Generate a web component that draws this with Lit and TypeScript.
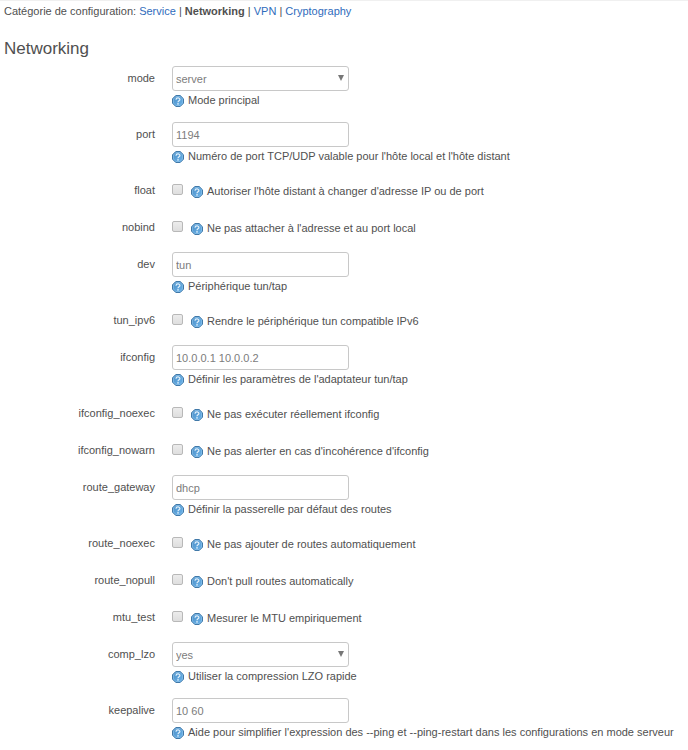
import { LitElement, html, css, svg } from "lit";
import { customElement, property } from "lit/decorators.js";

interface Option {
  name: string;
  kind: "select" | "text" | "check";
  value?: string;
  help: string;
}

const OPTIONS: Option[] = [
  { name: "mode", kind: "select", value: "server", help: "Mode principal" },
  { name: "port", kind: "text", value: "1194", help: "Numéro de port TCP/UDP valable pour l'hôte local et l'hôte distant" },
  { name: "float", kind: "check", help: "Autoriser l'hôte distant à changer d'adresse IP ou de port" },
  { name: "nobind", kind: "check", help: "Ne pas attacher à l'adresse et au port local" },
  { name: "dev", kind: "text", value: "tun", help: "Périphérique tun/tap" },
  { name: "tun_ipv6", kind: "check", help: "Rendre le périphérique tun compatible IPv6" },
  { name: "ifconfig", kind: "text", value: "10.0.0.1 10.0.0.2", help: "Définir les paramètres de l'adaptateur tun/tap" },
  { name: "ifconfig_noexec", kind: "check", help: "Ne pas exécuter réellement ifconfig" },
  { name: "ifconfig_nowarn", kind: "check", help: "Ne pas alerter en cas d'incohérence d'ifconfig" },
  { name: "route_gateway", kind: "text", value: "dhcp", help: "Définir la passerelle par défaut des routes" },
  { name: "route_noexec", kind: "check", help: "Ne pas ajouter de routes automatiquement" },
  { name: "route_nopull", kind: "check", help: "Don't pull routes automatically" },
  { name: "mtu_test", kind: "check", help: "Mesurer le MTU empiriquement" },
  { name: "comp_lzo", kind: "select", value: "yes", help: "Utiliser la compression LZO rapide" },
  { name: "keepalive", kind: "text", value: "10 60", help: "Aide pour simplifier l'expression des --ping et --ping-restart dans les configurations en mode serveur" },
];

const helpIcon = svg`<svg class="icon" viewBox="0 0 12 12" aria-hidden="true">
  <defs>
    <linearGradient id="g" x1="0" y1="0" x2="1" y2="1">
      <stop offset="0" stop-color="#4d8fc6" />
      <stop offset="1" stop-color="#68b2ea" />
    </linearGradient>
  </defs>
  <path d="M3.8 .5h4.4l3.3 3.3v4.4l-3.3 3.3H3.8L.5 8.2V3.8z" fill="url(#g)" stroke="#4179a8" stroke-linejoin="round" />
  <path d="M4 1.5h4l2.5 2.5v4L8 10.5H4L1.5 8V4z" fill="none" stroke="#8fc3ea" stroke-width=".6" />
  <path d="M4 4.7C4 2.4 8 2.4 7.9 4.6C7.8 5.8 6 5.8 6 7.2" fill="none" stroke="#e4f2fc" stroke-width="1.2" />
  <circle cx="6" cy="8.9" r=".8" fill="#e4f2fc" />
</svg>`;

@customElement("option-row")
class OptionRow extends LitElement {
  @property({ attribute: false }) option!: Option;

  static styles = css`
    :host {
      display: grid;
      grid-template-columns: 155px minmax(0, 1fr);
      column-gap: 17px;
      padding-bottom: 12px;
    }
    .name {
      line-height: 24px;
      text-align: right;
    }
    .check {
      display: flex;
      align-items: flex-start;
      gap: 8px;
      height: 25px;
    }
    .box {
      appearance: none;
      box-sizing: border-box;
      flex: none;
      width: 11px;
      height: 11px;
      margin: 6px 0 0;
      border: 1px solid #b8b8b8;
      border-radius: 2px;
      background: linear-gradient(#ececec, #dedede);
    }
    .box:checked {
      background: #3f86c4;
    }
    .field {
      position: relative;
      width: 177px;
      height: 25px;
    }
    .input {
      appearance: none;
      box-sizing: border-box;
      display: block;
      width: 100%;
      height: 25px;
      margin: 0;
      padding: 0 3px;
      border: 1px solid #c8c8c8;
      border-radius: 3px;
      background: #fff;
      color: #7c7c7c;
      font: inherit;
    }
    .arrow {
      position: absolute;
      top: 9px;
      right: 5px;
      width: 6px;
      height: 6px;
      fill: #777;
      pointer-events: none;
    }
    .help {
      display: flex;
      align-items: center;
      gap: 4px;
      height: 19px;
      line-height: 16px;
    }
    .help-text {
      padding-bottom: 2px;
    }
    .check .help {
      height: 28px;
    }
    .icon {
      flex: none;
      width: 12px;
      height: 12px;
    }
  `;

  render() {
    const { name, kind, value, help } = this.option;
    const helpLine = html`<span class="help" id="help">${helpIcon}<span class="help-text">${help}</span></span>`;
    return html`
      <label class="name" for="control">${name}</label>
      ${kind === "check"
        ? html`<div class="check">
            <input class="box" id="control" type="checkbox" aria-describedby="help" />${helpLine}
          </div>`
        : html`<div>
            <div class="field">
              ${kind === "select"
                ? html`<select class="input" id="control" aria-describedby="help">
                      <option>${value}</option>
                    </select>
                    <svg class="arrow" viewBox="0 0 6 6" aria-hidden="true"><path d="M0 0h6L3 6z" /></svg>`
                : html`<input class="input" id="control" type="text" .value=${value ?? ""} aria-describedby="help" />`}
            </div>
            ${helpLine}
          </div>`}
    `;
  }
}

@customElement("app-root")
class AppRoot extends LitElement {
  static styles = css`
    :host {
      display: block;
      background: #fff;
      color: #505050;
      font: 11px "Liberation Sans", Arial, sans-serif;
    }
    .categories {
      padding: 3px 4px 0;
      border-top: 1px solid #f0f0f0;
      line-height: 14px;
    }
    .link {
      color: #2f6cbc;
      text-decoration: none;
    }
    .title {
      margin: 0;
      padding: 20px 4px 6px;
      font-size: 17px;
      font-weight: 400;
      line-height: 22px;
    }
  `;

  render() {
    return html`
      <nav class="categories">
        Catégorie de configuration: <a class="link" href="#service">Service</a> |
        <strong>Networking</strong> | <a class="link" href="#vpn">VPN</a> |
        <a class="link" href="#cryptography">Cryptography</a>
      </nav>
      <main>
        <h1 class="title">Networking</h1>
        <form>${OPTIONS.map((option) => html`<option-row .option=${option}></option-row>`)}</form>
      </main>
    `;
  }
}
